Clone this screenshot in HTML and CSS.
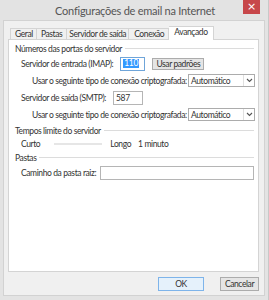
FILE: index.html
```html
<!DOCTYPE html>
<html>
<head>
<meta charset="utf-8">
<link rel="stylesheet" href="styles.css">
</head>
<body>
<div class="window">
  <div class="titlebar">
    <span class="title">Configurações de email na Internet</span>
    <span class="close">×</span>
  </div>
  <div class="client">
    <div class="tabs">
      <span class="tab first">Geral</span>
      <span class="tab t2">Pastas</span>
      <span class="tab t3">Servidor de saída</span>
      <span class="tab t4">Conexão</span>
      <span class="tab active">Avançado</span>
    </div>
    <div class="pane">
      <div class="group"><span>Números das portas do servidor</span><i class="line"></i></div>
      <div class="row r1">
        <span class="label">Servidor de entrada (IMAP):</span>
        <span class="input small imap"><span class="sel">110</span></span>
        <span class="btn">Usar padrões</span>
      </div>
      <div class="row r2">
        <span class="label">Usar o seguinte tipo de conexão criptografada:</span>
        <span class="select"><span class="val">Automático</span><span class="arrow"><svg width="7" height="5" viewBox="0 0 7 5"><path d="M1 1 L3.5 3.5 L6 1" fill="none" stroke="#555" stroke-width="1.1"/></svg></span></span>
      </div>
      <div class="row r1">
        <span class="label">Servidor de saída (SMTP):</span>
        <span class="input small smtp">587</span>
      </div>
      <div class="row r2">
        <span class="label">Usar o seguinte tipo de conexão criptografada:</span>
        <span class="select"><span class="val">Automático</span><span class="arrow"><svg width="7" height="5" viewBox="0 0 7 5"><path d="M1 1 L3.5 3.5 L6 1" fill="none" stroke="#555" stroke-width="1.1"/></svg></span></span>
      </div>
      <div class="group g2"><span>Tempos limite do servidor</span><i class="line"></i></div>
      <div class="row r1 slide">
        <span class="label">Curto</span>
        <span class="track"></span>
        <span class="label">Longo</span>
        <span class="label min">1 minuto</span>
      </div>
      <div class="group g3"><span>Pastas</span><i class="line"></i></div>
      <div class="row r1">
        <span class="label">Caminho da pasta raiz:</span>
        <span class="input wide"></span>
      </div>
    </div>
    <div class="buttons">
      <span class="btn big ok">OK</span>
      <span class="btn big cancel">Cancelar</span>
    </div>
  </div>
</div>
</body>
</html>
```

FILE: styles.css
```css
* { box-sizing: border-box; }
html, body { margin: 0; padding: 0; }
body {
  width: 269px; height: 300px; overflow: hidden;
  font-family: "Lato", "Open Sans", sans-serif;
  font-size: 8.5px; letter-spacing: -0.4px; color: #333;
  background: #ececec;
}
.window {
  width: 269px; height: 300px;
  background: #e3e3e3;
  border-right: 1px solid #c8c8c8;
  display: flex; flex-direction: column;
}
.titlebar {
  height: 20px; position: relative;
  display: flex; align-items: center; justify-content: center;
}
.title { font-size: 11px; letter-spacing: -0.25px; color: #555; padding-left: 2px; }
.close {
  position: absolute; right: 8px; top: 0;
  width: 17px; height: 14px; background: #c7474a;
  color: #fff; font-size: 11px; line-height: 13px; text-align: center; letter-spacing: 0;
  font-family: "DejaVu Sans", sans-serif;
}
.client {
  margin: 0 3px 4px 3px; flex: 1;
  background: #f0f0f0;
  border: 1px solid #d2d2d2;
  padding: 4px 5px 0 4px;
  display: flex; flex-direction: column;
}
.tabs { display: flex; align-items: flex-end; height: 14px; padding-left: 2px; position: relative; z-index: 1; }
.tab {
  height: 11px; padding: 0 3px; border: 1px solid #d4d4d4; border-left: none; border-bottom: none;
  line-height: 10px; background: #f0f0f0; color: #333; white-space: nowrap;
}
.tab.first { border-left: 1px solid #d4d4d4; padding: 0 3px 0 4px; }
.tab.t2 { padding: 0 4px; }
.tab.t3 { padding: 0 2px; }
.tab.t4 { padding: 0 4px 0 5px; }
.tab.active { height: 14px; background: #fff; padding: 0 5px 0 5px; line-height: 11px; margin-bottom: -1px; }
.pane {
  height: 233px; background: #fff; border: 1px solid #d4d4d4;
  padding: 2px 3px 0 6px;
  display: flex; flex-direction: column;
}
.group { display: flex; align-items: center; height: 13px; gap: 3px; }
.group .line { flex: 1; height: 1px; background: #dcdcdc; margin-right: 1px; }
.g2 { margin-top: 1px; }
.g3 { margin-top: 0; }
.row { display: flex; align-items: center; height: 17px; }
.r1 { padding-left: 6px; }
.r2 { padding-left: 17px; }
.label { white-space: nowrap; }
.input {
  height: 14px; border: 1px solid #b5b5b5; background: #fff;
  display: flex; align-items: center; padding-left: 2px;
}
.imap { width: 25px; margin-left: 7px; border-color: #6fa5d9; }
.smtp { width: 30px; margin-left: 7px; }
.sel { background: #3399ff; color: #fff; padding: 0 1px; line-height: 9px; }
.wide { flex: 1; margin-left: 4px; margin-right: 1px; }
.btn {
  height: 12px; border: 1px solid #acacac; background: #e5e5e5;
  display: flex; align-items: center; justify-content: center;
  padding: 0; margin-left: 7px; width: 52px; white-space: nowrap;
}
.select {
  margin-left: auto; width: 67px; height: 13px;
  border: 1px solid #acacac; background: #fff;
  display: flex; align-items: center;
}
.select .val { flex: 1; padding-left: 2px; }
.select .arrow {
  width: 11px; height: 11px; border-left: 1px solid #e0e0e0;
  display: flex; align-items: center; justify-content: center;
}
.slide { height: 14px; }
.track { width: 48px; height: 2px; background: #e6e6e6; margin: 0 8px 0 14px; }
.min { margin-left: 7px; }
.buttons { display: flex; justify-content: flex-end; gap: 16px; padding-top: 5px; }
.btn.big { height: 14px; margin-left: 0; width: 46px; }
.btn.ok { border-color: #7eb4ea; background: #e5f1fb; }
.btn.cancel { width: 39px; }
```
